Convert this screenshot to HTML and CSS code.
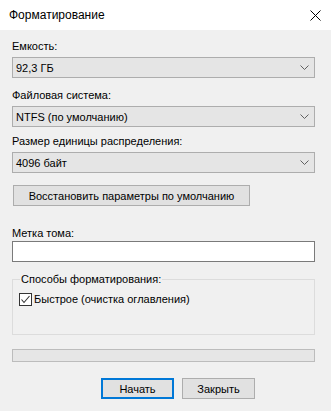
FILE: index.html
```html
<!DOCTYPE html>
<html lang="ru">
<head>
    <meta charset="UTF-8">
    <meta name="viewport" content="width=device-width, initial-scale=1.0">
    <title>Форматирование</title>
    <link rel="stylesheet" href="styles.css">
</head>
<body>
    <div class="window">
        <div class="titlebar">
            <span class="title">Форматирование</span>
            <svg class="close" width="11" height="11" viewBox="0 0 11 11">
                <path d="M0.5 0.5 L10.5 10.5 M10.5 0.5 L0.5 10.5" stroke="#000" stroke-width="1" fill="none"/>
            </svg>
        </div>

        <div class="content">
            <div class="field">
                <div class="label">Емкость:</div>
                <div class="combo">
                    <span>92,3 ГБ</span>
                    <svg class="chevron" width="9" height="5" viewBox="0 0 9 5"><path d="M0.5 0.5 L4.5 4.5 L8.5 0.5" stroke="#606060" fill="none"/></svg>
                </div>
            </div>

            <div class="field field-fs">
                <div class="label">Файловая система:</div>
                <div class="combo">
                    <span>NTFS (по умолчанию)</span>
                    <svg class="chevron" width="9" height="5" viewBox="0 0 9 5"><path d="M0.5 0.5 L4.5 4.5 L8.5 0.5" stroke="#606060" fill="none"/></svg>
                </div>
            </div>

            <div class="field field-unit">
                <div class="label">Размер единицы распределения:</div>
                <div class="combo">
                    <span>4096 байт</span>
                    <svg class="chevron" width="9" height="5" viewBox="0 0 9 5"><path d="M0.5 0.5 L4.5 4.5 L8.5 0.5" stroke="#606060" fill="none"/></svg>
                </div>
            </div>

            <button class="btn btn-restore">Восстановить параметры по умолчанию</button>

            <div class="field field-volume">
                <div class="label">Метка тома:</div>
                <input class="textbox" type="text">
            </div>

            <fieldset class="group">
                <legend>Способы форматирования:</legend>
                <label class="check">
                    <span class="checkbox">
                        <svg width="11" height="11" viewBox="0 0 11 11"><path d="M1.5 5.5 L4 8.5 L9.5 2" stroke="#333" stroke-width="1.1" fill="none"/></svg>
                    </span>
                    Быстрое (очистка оглавления)
                </label>
            </fieldset>

            <div class="progress"></div>

            <div class="actions">
                <button class="btn btn-primary">Начать</button>
                <button class="btn">Закрыть</button>
            </div>
        </div>
    </div>
</body>
</html>
```

FILE: styles.css
```css
body {
    margin: 0;
    background: #f0f0f0;
    font-family: "Liberation Sans", Arial, sans-serif;
    font-size: 11px;
    color: #000;
}

.window {
    width: 331px;
    height: 411px;
    background: #f0f0f0;
}

.titlebar {
    height: 30px;
    background: #fff;
    display: flex;
    align-items: center;
    justify-content: space-between;
    padding: 0 10px 0 9px;
}

.title {
    font-size: 12px;
    line-height: 16px;
}

.close {
    display: block;
}

.content {
    padding: 8px 16px 0 12px;
}

.label {
    line-height: 16px;
    margin-bottom: 3px;
    white-space: nowrap;
}

.field-fs {
    margin-top: 9px;
}

.field-unit {
    margin-top: 6px;
}

.combo {
    height: 21px;
    box-sizing: border-box;
    border: 1px solid #adadad;
    background: #e5e5e5;
    display: flex;
    align-items: center;
    justify-content: space-between;
    padding: 0 5px 0 3px;
}

.chevron {
    display: block;
}

.btn {
    font-family: inherit;
    font-size: 11px;
    color: #000;
    height: 21px;
    box-sizing: border-box;
    border: 1px solid #adadad;
    background: #e1e1e1;
    padding: 0;
    display: block;
    white-space: nowrap;
}

.btn-restore {
    width: 237px;
    margin: 12px 0 0 1px;
}

.field-volume {
    margin-top: 19px;
}

.field-volume .label {
    margin-bottom: 0;
}

.textbox {
    display: block;
    width: 100%;
    height: 21px;
    box-sizing: border-box;
    border: 1px solid #7a7a7a;
    background: #fff;
    outline: none;
    margin: 0;
}

.group {
    margin: 9px 0 0 0;
    padding: 0 0 27px 0;
    border: 1px solid #dcdcdc;
}

.group legend {
    margin-left: 7px;
    padding: 0 1px;
    line-height: 16px;
}

.check {
    display: flex;
    align-items: center;
    gap: 2px;
    line-height: 16px;
    margin: 4px 0 0 6px;
}

.checkbox {
    width: 13px;
    height: 13px;
    box-sizing: border-box;
    border: 1px solid #333;
    background: #fff;
    display: flex;
    align-items: center;
    justify-content: center;
}

.checkbox svg {
    display: block;
}

.progress {
    margin-top: 14px;
    height: 13px;
    box-sizing: border-box;
    border: 1px solid #bcbcbc;
    background: #e6e6e6;
}

.actions {
    display: flex;
    gap: 8px;
    margin-top: 16px;
    padding-left: 89px;
}

.actions .btn {
    width: 73px;
}

.btn-primary {
    border: 2px solid #0078d7;
}
```
